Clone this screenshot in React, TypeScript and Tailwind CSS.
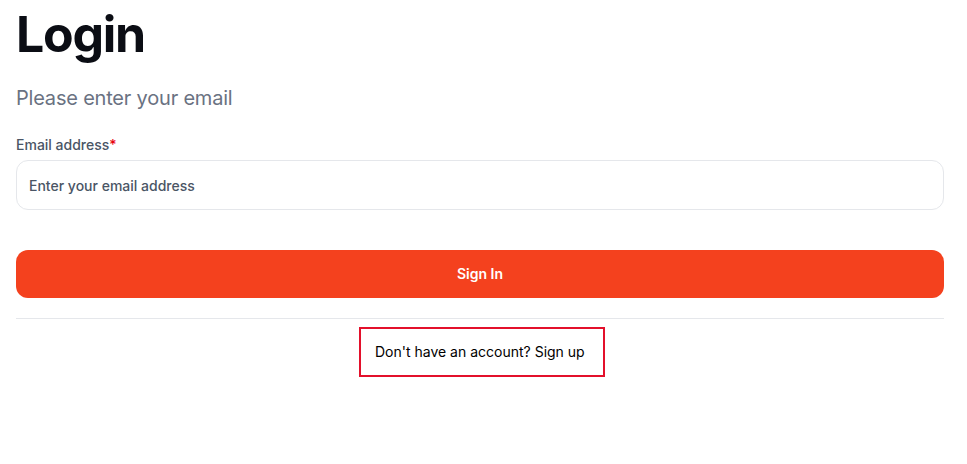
import React from "react";

function LoginForm() {
  return (
    <div className="ml-4 w-[928px] pt-[6px]">
      <h1 className="text-[50px] font-bold leading-[56px] tracking-tight text-[#0b0d14]">
        Login
      </h1>
      <p className="mt-[22px] text-xl leading-7 tracking-[-0.01em] text-gray-500">
        Please enter your email
      </p>

      <form className="mt-[23px] flex flex-col">
        <label className="text-sm font-medium leading-5 text-gray-600">
          Email address<span className="text-red-600">*</span>
        </label>
        <input
          type="email"
          placeholder="Enter your email address"
          className="mt-[5px] h-[50px] w-full rounded-xl border border-gray-200 px-3 text-sm font-medium text-gray-700 outline-none placeholder:text-gray-600"
        />
        <button
          type="button"
          className="mt-10 h-12 w-full rounded-xl bg-[#f4411e] text-sm font-semibold text-white"
        >
          Sign In
        </button>
      </form>

      <div className="mt-5 border-t border-gray-200" />

      <div className="mt-2 flex justify-center pl-1">
        <div className="flex h-[50px] w-[246px] items-center border-2 border-[#e3102b] pl-[14px] text-sm text-black">
          Don't have an account? Sign up
        </div>
      </div>
    </div>
  );
}

export default function App() {
  return (
    <div className="min-h-[464px] bg-white font-['Inter',sans-serif]">
      <LoginForm />
    </div>
  );
}
